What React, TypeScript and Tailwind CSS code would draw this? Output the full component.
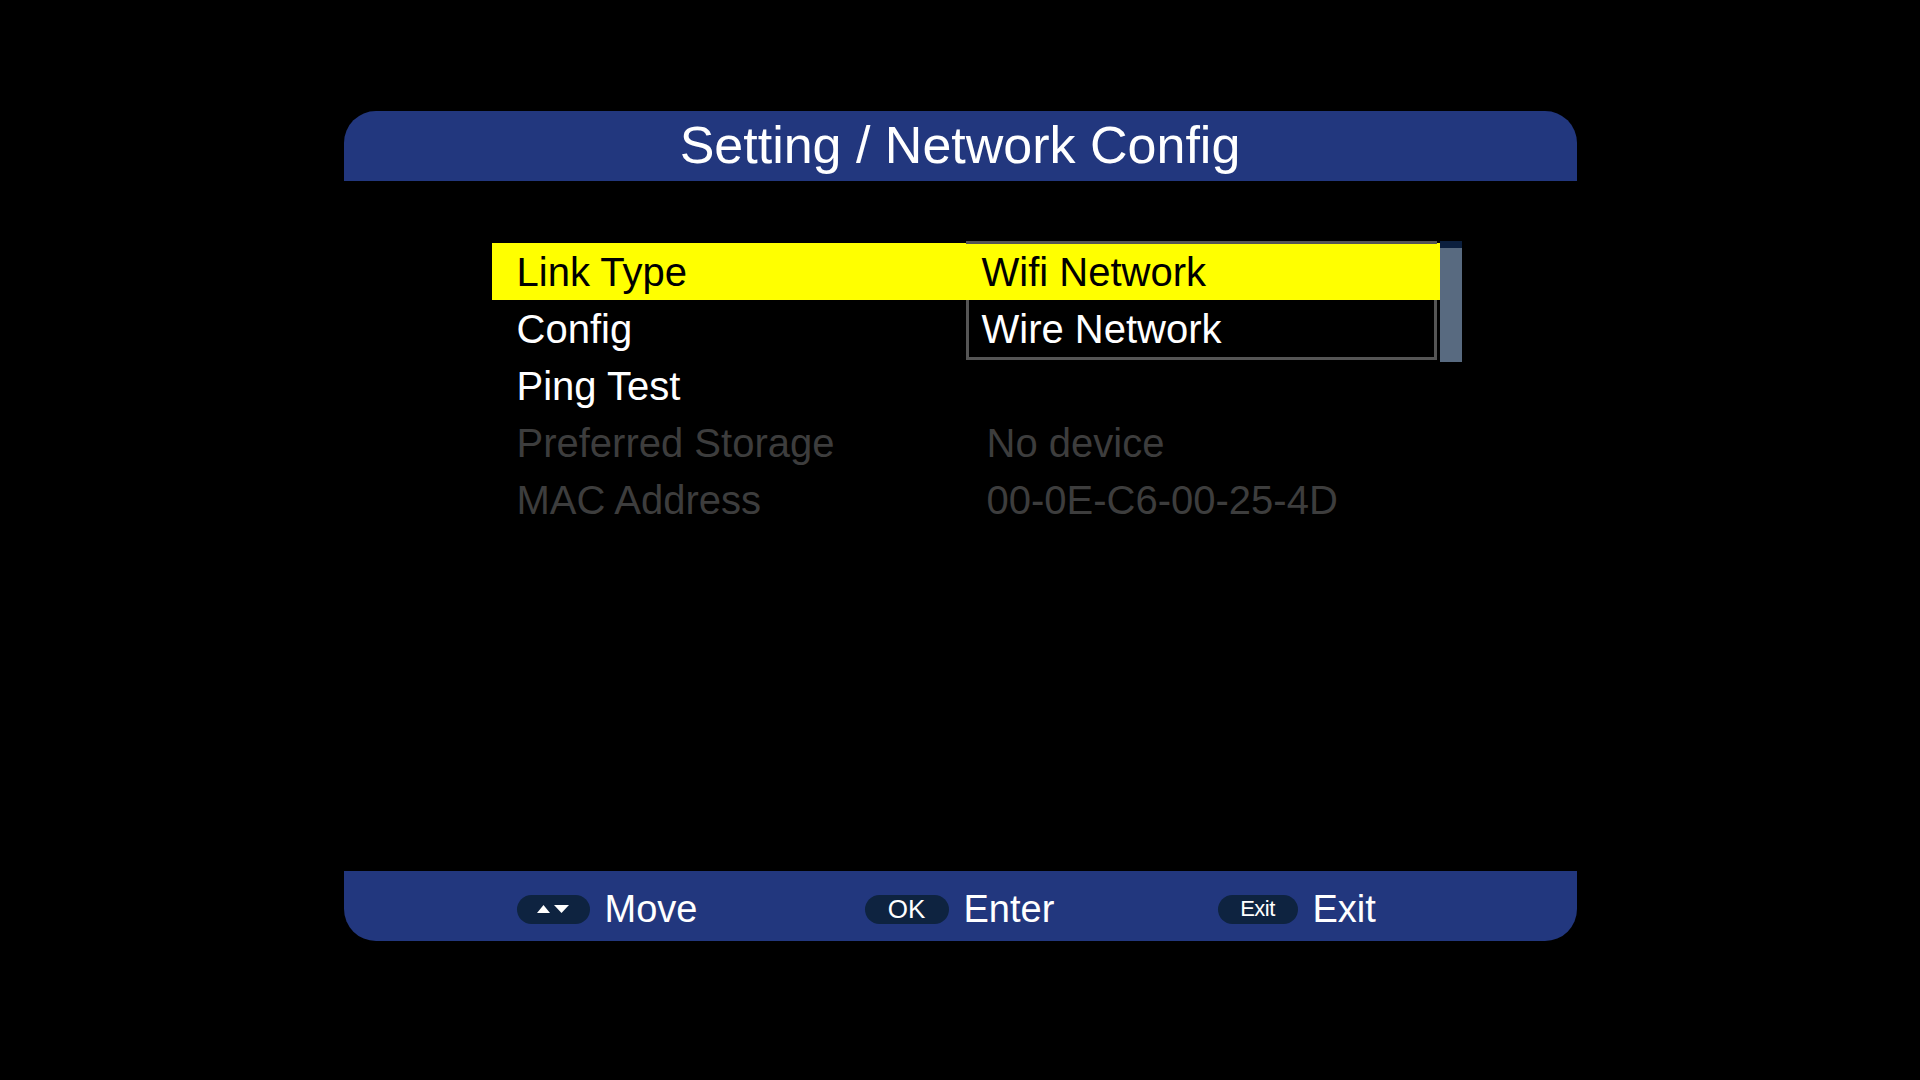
const rows = [
  { label: "Link Type", value: "", active: true, dim: false },
  { label: "Config", value: "", active: false, dim: false },
  { label: "Ping Test", value: "", active: false, dim: false },
  { label: "Preferred Storage", value: "No device", active: false, dim: true },
  { label: "MAC Address", value: "00-0E-C6-00-25-4D", active: false, dim: true },
]

function ArrowKeys() {
  return (
    <svg width="34" height="10" viewBox="0 0 34 10">
      <polygon points="1,9 7.5,1 14,9" fill="#ffffff" />
      <polygon points="18,1 33,1 25.5,9" fill="#ffffff" />
    </svg>
  )
}

function Hint({ keyCap, label, width, capWidth }: { keyCap: React.ReactNode; label: string; width: string; capWidth: string }) {
  return (
    <div className={`flex items-center gap-[15px] ${width}`}>
      <div className={`flex h-[29px] items-center justify-center rounded-full bg-[#0e2340] text-white ${capWidth}`}>
        {keyCap}
      </div>
      <span className="text-[38px] leading-none text-white">{label}</span>
    </div>
  )
}

export default function App() {
  return (
    <div className="h-screen w-full overflow-hidden bg-black font-['Liberation_Sans',Arial,sans-serif]">
      <div className="mx-auto flex w-[1233px] flex-col pt-[111px]">
        {/* title bar */}
        <div className="flex h-[70px] items-center justify-center rounded-t-[32px] bg-[#22377e] pb-[2px]">
          <h1 className="text-[52px] leading-none text-white">Setting / Network Config</h1>
        </div>

        {/* menu body */}
        <div className="relative h-[690px] pl-[148px] pt-[62px]">
          <div className="flex w-[948px] flex-col">
            {rows.map((row) => (
              <div
                key={row.label}
                className={`flex h-[57px] items-center text-[40px] leading-none ${
                  row.active ? "bg-[#ffff00] text-black" : row.dim ? "text-[#3d3d3d]" : "text-white"
                }`}
              >
                <span className="w-[495px] pl-[25px]">{row.label}</span>
                <span>{row.value}</span>
              </div>
            ))}
          </div>

          {/* link type dropdown */}
          <div className="absolute left-[622px] top-[60px] flex h-[121px] items-start">
            <div className="h-[119px] w-[471px] border-[3px] border-[#555555] bg-black">
              <div className="-ml-[3px] flex h-[56px] w-[474px] items-center bg-[#ffff00] pl-[16px] text-[40px] leading-none text-black">
                Wifi Network
              </div>
              <div className="flex h-[57px] items-center pl-[13px] text-[40px] leading-none text-white">
                Wire Network
              </div>
            </div>
            <div className="ml-[3px] flex h-[121px] w-[22px] flex-col bg-[#586a80]">
              <div className="h-[7px] bg-[#0b1f3e]" />
            </div>
          </div>
        </div>

        {/* key hints */}
        <div className="flex h-[70px] items-center rounded-b-[32px] bg-[#22377e] pl-[173px] pt-[6px]">
          <Hint keyCap={<ArrowKeys />} label="Move" width="w-[348px]" capWidth="w-[73px]" />
          <Hint
            keyCap={<span className="text-[26px] leading-none">OK</span>}
            label="Enter"
            width="w-[353px]"
            capWidth="w-[84px]"
          />
          <Hint
            keyCap={<span className="text-[22px] leading-none tracking-tight">Exit</span>}
            label="Exit"
            width="w-[240px]"
            capWidth="w-[80px]"
          />
        </div>
      </div>
    </div>
  )
}
